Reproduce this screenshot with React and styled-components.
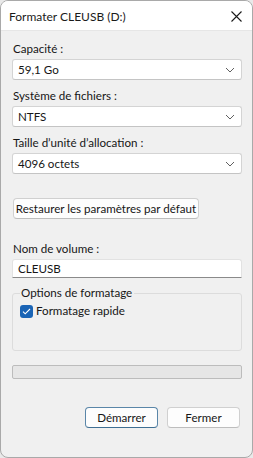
import React from "react";
import styled, { createGlobalStyle } from "styled-components";

const Global = createGlobalStyle`
  html, body { margin: 0; padding: 0; background: #e9e9e9; }
  body { font-family: Lato, "Noto Sans", sans-serif; font-size: 11.6px; color: #161616; }
  * { box-sizing: border-box; }
`;

const Chevron = () => (
  <svg width="10" height="6" viewBox="0 0 10 6" fill="none">
    <path d="M1 1l4 4 4-4" stroke="#606060" strokeWidth="1" />
  </svg>
);

const App = () => (
  <>
    <Global />
    <Window>
      <TitleBar>
        <Title>Formater CLEUSB (D:)</Title>
        <Close aria-label="Fermer">
          <svg width="11" height="11" viewBox="0 0 11 11">
            <path d="M0.5 0.5l10 10M10.5 0.5l-10 10" stroke="#1a1a1a" strokeWidth="1.1" />
          </svg>
        </Close>
      </TitleBar>
      <Body>
        <Label>Capacité :</Label>
        <Combo>
          <span>59,1 Go</span>
          <Chevron />
        </Combo>
        <Label $top={8}>Système de fichiers :</Label>
        <Combo>
          <span>NTFS</span>
          <Chevron />
        </Combo>
        <Label $top={8}>Taille d’unité d’allocation :</Label>
        <Combo>
          <span>4096 octets</span>
          <Chevron />
        </Combo>
        <Button $width={186} $top={24} $left={1}>
          Restaurer les paramètres par défaut
        </Button>
        <Label $top={22}>Nom de volume :</Label>
        <TextBox>CLEUSB</TextBox>
        <Group>
          <Legend>Options de formatage</Legend>
          <CheckRow>
            <Check>
              <svg width="9" height="7" viewBox="0 0 9 7" fill="none">
                <path d="M1 3.6l2.2 2.2L8 1" stroke="#fff" strokeWidth="1.1" />
              </svg>
            </Check>
            Formatage rapide
          </CheckRow>
        </Group>
        <Progress />
        <Footer>
          <Button $width={73} $primary>Démarrer</Button>
          <Button $width={73}>Fermer</Button>
        </Footer>
      </Body>
    </Window>
  </>
);

const Window = styled.div`
  width: 253px;
  height: 458px;
  border: 1px solid #a9a9a9;
  border-radius: 8px;
  overflow: hidden;
  background: #f0f0f0;
  display: flex;
  flex-direction: column;
`;

const TitleBar = styled.div`
  height: 30px;
  background: #ffffff;
  display: flex;
  align-items: center;
  justify-content: space-between;
  padding: 0 8px 0 8px;
  border-bottom: 1px solid #e6e6e6;
`;

const Title = styled.div`
  font-size: 12px;
  color: #1a1a1a;
  padding-top: 1px;
`;

const Close = styled.div`
  width: 20px;
  display: flex;
  justify-content: flex-end;
  padding-right: 2px;
  padding-top: 1px;
`;

const Body = styled.div`
  flex: 1;
  display: flex;
  flex-direction: column;
  padding: 10px 10px 0 11px;
`;

const Label = styled.div`
  height: 16px;
  line-height: 16px;
  margin-top: ${({ $top }) => $top || 0}px;
  margin-bottom: 2px;
  padding-left: 1px;
`;

const Combo = styled.div`
  height: 21px;
  background: #ffffff;
  border: 1px solid #d4d4d4;
  border-bottom-color: #c4c4c4;
  border-radius: 3px;
  display: flex;
  align-items: center;
  justify-content: space-between;
  padding: 0 6px 0 5px;
`;

const Button = styled.div`
  align-self: ${({ $left }) => ($left !== undefined ? "flex-start" : "auto")};
  margin-left: ${({ $left }) => $left || 0}px;
  margin-top: ${({ $top }) => $top || 0}px;
  width: ${({ $width }) => $width}px;
  height: 21px;
  display: flex;
  align-items: center;
  justify-content: center;
  background: #fdfdfd;
  border: 1px solid ${({ $primary }) => ($primary ? "#5a86a8" : "#d0d0d0")};
  border-bottom-color: ${({ $primary }) => ($primary ? "#3f6f93" : "#bdbdbd")};
  border-radius: 4px;
  white-space: nowrap;
`;

const TextBox = styled.div`
  height: 19px;
  background: #ffffff;
  border: 1px solid #e2e2e2;
  border-bottom: 1px solid #8a8a8a;
  border-radius: 3px 3px 0 0;
  display: flex;
  align-items: center;
  padding-left: 5px;
`;

const Group = styled.div`
  position: relative;
  margin-top: 15px;
  height: 58px;
  border: 1px solid #dcdcdc;
  border-radius: 3px;
  padding: 9px 0 0 7px;
`;

const Legend = styled.div`
  position: absolute;
  top: -9px;
  left: 7px;
  padding: 0 2px 0 1px;
  background: #f0f0f0;
  line-height: 16px;
`;

const CheckRow = styled.div`
  display: flex;
  align-items: center;
  gap: 3px;
  line-height: 16px;
`;

const Check = styled.div`
  width: 13px;
  height: 13px;
  border-radius: 3px;
  background: #1a64b5;
  display: flex;
  align-items: center;
  justify-content: center;
`;

const Progress = styled.div`
  margin-top: 14px;
  height: 14px;
  background: #e6e6e6;
  border: 1px solid #bcbcbc;
  border-radius: 2px;
`;

const Footer = styled.div`
  margin-top: 28px;
  display: flex;
  justify-content: flex-end;
  gap: 9px;
  padding-right: 2px;
`;

export default App;
